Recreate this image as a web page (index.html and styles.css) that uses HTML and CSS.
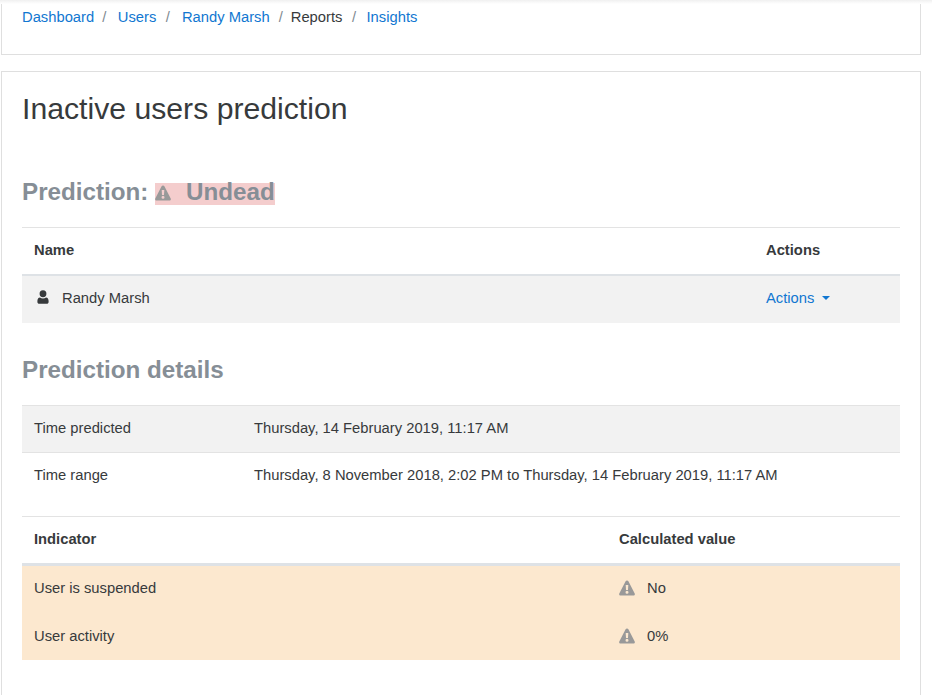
FILE: index.html
```html
<!DOCTYPE html>
<html lang="en">
<head>
<meta charset="utf-8">
<title>Inactive users prediction</title>
<link rel="stylesheet" href="styles.css">
</head>
<body>
<svg class="defs" width="0" height="0" aria-hidden="true">
  <symbol id="warn" viewBox="0 0 16 16"><path fill-rule="evenodd" d="M8 .4c.6 0 1.100.3 1.400.9l6.300 12.300c.5 1-.2 2-1.300 2H1.600c-1.100 0-1.800-1-1.300-2L6.600 1.300C6.900.7 7.400.4 8 .4zM6.700 5l.3 5h2l.3-5zM8 10.800a1.500 1.500 0 1 0 0 3 1.500 1.500 0 0 0 0-3z"/></symbol>
</svg>
<div class="page">
  <nav class="card crumbs">
    <ol class="breadcrumb">
      <li><a href="#">Dashboard</a></li>
      <li><a href="#">Users</a></li>
      <li><a href="#">Randy Marsh</a></li>
      <li class="plain">Reports</li>
      <li><a href="#">Insights</a></li>
    </ol>
  </nav>
  <main class="card content">
    <h2>Inactive users prediction</h2>
    <h3 class="prediction">Prediction: <span class="outcome"><svg class="icon-warn big"><use href="#warn"/></svg>Undead</span></h3>
    <table class="table">
      <thead><tr><th>Name</th><th class="col-actions">Actions</th></tr></thead>
      <tbody>
        <tr class="stripe">
          <td class="user-cell"><svg class="icon-user" viewBox="0 0 12 14"><path d="M6 .3a3.4 3.4 0 0 1 3.400 3.500A3.400 3.400 0 0 1 6 7.200a3.400 3.400 0 0 1-3.400-3.400A3.400 3.400 0 0 1 6 .3zM3 7.400c.8.600 1.900 1 3 1s2.200-.4 3-1c1.700.1 2.600 1.500 2.600 3.600v1c0 1.100-.8 1.800-1.800 1.800H2.200C1.200 13.800.4 13.100.4 12v-1C.4 8.900 1.300 7.500 3 7.400z"/></svg>Randy Marsh</td>
          <td class="col-actions"><a href="#" class="dropdown">Actions</a></td>
        </tr>
      </tbody>
    </table>
    <h3 class="details">Prediction details</h3>
    <table class="table flat">
      <tbody>
        <tr class="stripe"><td class="col-label">Time predicted</td><td>Thursday, 14 February 2019, 11:17 AM</td></tr>
        <tr><td class="col-label">Time range</td><td>Thursday, 8 November 2018, 2:02 PM to Thursday, 14 February 2019, 11:17 AM</td></tr>
      </tbody>
    </table>
    <table class="table indicators">
      <thead><tr><th>Indicator</th><th class="col-value">Calculated value</th></tr></thead>
      <tbody>
        <tr class="warning"><td>User is suspended</td><td class="col-value"><svg class="icon-warn"><use href="#warn"/></svg>No</td></tr>
        <tr class="warning"><td>User activity</td><td class="col-value"><svg class="icon-warn"><use href="#warn"/></svg>0%</td></tr>
      </tbody>
    </table>
  </main>
</div>
</body>
</html>
```
FILE: styles.css
```css
html, body {
  margin: 0;
  height: 695px;
  overflow: hidden;
  background: #fff;
}
body {
  font-family: "Liberation Sans", Arial, sans-serif;
  font-size: 14.76px;
  line-height: 22.14px;
  color: #373a3c;
  position: relative;
}
body::before {
  content: "";
  position: absolute;
  left: 0;
  right: 0;
  top: 0;
  height: 4px;
  background: linear-gradient(#f0f0f0, #fff);
  z-index: 1;
}
.defs { position: absolute; }
.page {
  width: 920px;
  margin-left: 1px;
}
.card {
  border: 1px solid #dfdfdf;
  background: #fff;
}
.crumbs {
  border-top: 0;
  height: 55px;
  box-sizing: border-box;
  margin-bottom: 16px;
  padding: 6px 20px 0;
}
.breadcrumb {
  list-style: none;
  margin: 0;
  padding: 0;
  display: flex;
}
.breadcrumb li + li::before {
  content: "/";
  color: #818a91;
  padding: 0 11.5px 0 8px;
}
.breadcrumb li:nth-child(3)::before { padding: 0 12px 0 9.5px; }
.breadcrumb li:nth-child(4)::before { padding: 0 8px 0 9px; }
.breadcrumb li:nth-child(5)::before { padding: 0 10.5px 0 9.5px; }
a { color: #1177d1; text-decoration: none; }
.content {
  height: 680px;
  box-sizing: border-box;
  padding: 20px 20px 0;
}
h2 {
  font-size: 30.2px;
  font-weight: 400;
  line-height: 34px;
  margin: 0 0 52px;
}
h3 {
  font-size: 24.2px;
  font-weight: 700;
  line-height: 28px;
  height: 28px;
  color: #868e96;
  margin: 0;
}
.prediction { margin-bottom: 21px; }
.outcome {
  display: inline-block;
  background: #f4cdcd;
  line-height: 18px;
  height: 22px;
}
.icon-warn {
  width: 16px;
  height: 16px;
  fill: #999;
  margin-right: 12px;
  vertical-align: -3px;
}
.icon-warn.big {
  margin-right: 15px;
  vertical-align: -1px;
}
.table {
  width: 100%;
  border-collapse: collapse;
  table-layout: fixed;
}
.table th, .table td {
  padding: 11px 12px 13px;
  text-align: left;
  border-top: 1px solid #e3e3e3;
  font-size: 14.76px;
  line-height: 22.14px;
  vertical-align: top;
}
.table th { font-weight: 700; border-bottom: 2px solid #dee2e6; }
.table tbody tr:first-child td { border-top: 0; }
.stripe td { background: #f2f2f2; }
.table .user-cell, .table .user-cell + td { padding-bottom: 14px; }
.icon-user {
  width: 12px;
  height: 14px;
  fill: #373a3c;
  margin: 0 13px 0 3px;
  vertical-align: -1px;
}
.col-actions { width: 122px; }
.dropdown::after {
  content: "";
  display: inline-block;
  margin-left: 8px;
  vertical-align: 3px;
  border-top: 4px solid;
  border-left: 4px solid transparent;
  border-right: 4px solid transparent;
}
.details { margin: 33px 0 21px; }
.col-label { width: 196px; }
.flat tbody tr:first-child td { border-top: 1px solid #e3e3e3; }
.indicators { margin-top: 16px; }
.indicators th { border-bottom-width: 3px; }
.col-value { width: 269px; }
.warning td { background: #fce8cf; border-top: 0; }
.table .warning:last-child td { padding-top: 13px; }
```
